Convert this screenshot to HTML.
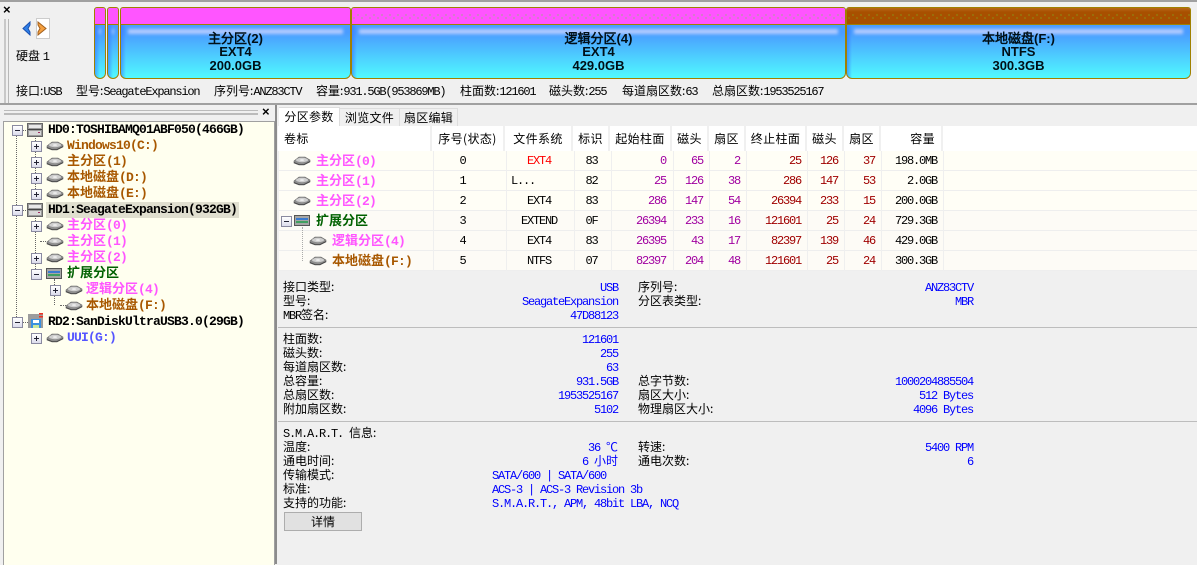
<!DOCTYPE html>
<html><head><meta charset="utf-8"><style>
html,body{margin:0;padding:0}
body{position:relative;width:1197px;height:564px;overflow:hidden;background:#f0f0f0;font-family:"WenQuanYi Zen Hei","Noto Sans CJK SC",sans-serif;font-size:12px;color:#000}
div,svg{position:absolute}
.t{white-space:nowrap;line-height:14px;height:14px}
.t i,i{font:normal 12px/14px "Liberation Mono",monospace;letter-spacing:-1.2px}
.r{text-align:right}
.c{text-align:center}
.b{font-weight:bold}
.bl{color:#0000ff}
.bl i{color:#0000ff}
.bar{top:7px;height:70px;border:1px solid #a08000;border-radius:3px 3px 6px 6px;box-sizing:content-box;overflow:hidden;background:linear-gradient(90deg,rgba(50,110,255,.55),rgba(50,110,255,0) 5px),linear-gradient(#4a9cff 35%,#50faff 100%)}
.bar .top{position:absolute;left:0;right:0;top:0;height:16px;background:#ff55ff;border-bottom:1px solid #a08000}
.bar .top.dot{background:radial-gradient(circle,#66dd44 .6px,transparent .8px) 2px 3px/8px 8px repeat-x,radial-gradient(circle,#66dd44 .6px,transparent .8px) 6px 6px/8px 8px repeat-x,#ff55ff}
.bar .top.br{background:radial-gradient(circle,#77bb22 .6px,transparent .8px) 2px 3px/8px 8px repeat-x,radial-gradient(circle,#77bb22 .6px,transparent .8px) 6px 6px/8px 8px repeat-x,linear-gradient(#b86818 0,#a85000 4px)}
.bar .hl{position:absolute;left:7px;right:7px;top:21px;height:5px;background:#b4ccff;filter:blur(1.5px)}
.bar .lb{position:absolute;left:0;right:0;text-align:center;font-weight:bold;font-size:13px;line-height:14px;color:#001018;font-family:"Liberation Sans","WenQuanYi Zen Hei",sans-serif}
.tr{left:4px;white-space:nowrap;font-weight:bold;font-size:13px;line-height:16px;height:16px;margin-top:-1px}
.tr i{font:bold 13px/16px "Liberation Mono",monospace;letter-spacing:-.8px}
.m{color:#ff55ff}.o{color:#a85800}.g{color:#006000}.u{color:#5555ff}
.hd{top:126px;height:25px;line-height:25px;text-align:center;background:#fff;border-right:2px solid #f0f0f0;box-sizing:border-box;font-size:12px;letter-spacing:.4px}
.row{left:279px;width:918px;height:19px;border-bottom:1px solid #eeeeee}
.vl{top:151px;width:1px;height:120px;background:#efefef}
.cell{white-space:nowrap;height:20px;line-height:20px;margin-top:-1px}
.cell i{font:normal 12px/20px "Liberation Mono",monospace;letter-spacing:-1.2px}
.cell.tr i{font:bold 13px/20px "Liberation Mono",monospace;letter-spacing:-.8px}
.pu{color:#a000a0}.pu i{color:#a000a0}.rd{color:#a00000}.rd i{color:#a00000}
.pb{width:9px;height:9px;border:1px solid #8a8aa0;background:linear-gradient(#fff,#dcdcec)}
.pb:before{content:"";position:absolute;left:2px;right:2px;top:4px;height:1px;background:#223}
.pb.p:after{content:"";position:absolute;top:2px;bottom:2px;left:4px;width:1px;background:#223}
.dv{width:1px;border-left:1px dotted #666}
.dh{height:1px;border-top:1px dotted #666}
</style></head><body>
<svg width="0" height="0" style="position:absolute"><defs>
<symbol id="d" viewBox="0 0 18 10"><path d="M1 5 L6 1 H12 L17 4 V6 L11 9 H6 L1 7Z" fill="#8e8e8e" stroke="#666" stroke-width=".6"/><ellipse cx="9" cy="4" rx="6" ry="2.2" fill="#cfcfcf"/><ellipse cx="9" cy="4" rx="2" ry=".8" fill="#f4f4f4"/><path d="M1 6.5 L6 8.5 H11 L17 5.5" stroke="#444" stroke-width=".8" fill="none"/></symbol>
<symbol id="h" viewBox="0 0 16 14"><rect x=".5" y=".5" width="15" height="13" fill="#9c9c9c" stroke="#666"/><rect x="2" y="2" width="12" height="3" fill="#e8e8e8"/><rect x="1" y="6" width="14" height="1" fill="#444"/><rect x="2" y="8" width="12" height="4" fill="#d8d8d8"/><rect x="11" y="9" width="2" height="1" fill="#a03060"/></symbol>
<symbol id="x" viewBox="0 0 16 11"><rect x=".5" y=".5" width="15" height="10" fill="#a6a6a6" stroke="#555"/><rect x="2" y="3" width="12" height="2" fill="#3a7ad0"/><rect x="2" y="6" width="12" height="2" fill="#40a060"/></symbol>
</defs></svg>

<div style="left:0;top:0;width:1197px;height:2px;background:#a0a0a0"></div>
<div class="t b" style="left:3px;top:3px;font-family:'Liberation Sans';font-size:13px">×</div>
<div style="left:4px;top:19px;width:2px;height:84px;background:#c8c8c8"></div>
<div style="left:8px;top:19px;width:1px;height:84px;background:#b8b8b8"></div>
<div style="left:36px;top:18px;width:12px;height:19px;background:#fff;border:1px solid #ccc"></div>
<svg style="left:21px;top:21px" width="11" height="15"><path d="M9 1 L2 7.5 L9 14 L9 11 L7 7.5 L9 4Z" fill="#2f80e8" stroke="#1a50b0" stroke-width="1"/></svg>
<svg style="left:37px;top:21px" width="10" height="15"><path d="M1 1 L9 7.5 L1 14 L1 11 L3 7.5 L1 4Z" fill="#f5a040" stroke="#a06020" stroke-width="1"/></svg>
<div class="t" style="left:16px;top:49px">硬盘 <i>1</i></div>

<div class="bar" style="left:94px;width:10px"><div class="top"></div><div class="hl" style="left:4px;right:4px"></div></div>
<div class="bar" style="left:107px;width:10px"><div class="top"></div><div class="hl" style="left:4px;right:4px"></div></div>
<div class="bar" style="left:120px;width:229px"><div class="top"></div><div class="hl"></div><div class="lb" style="top:24px">主分区(2)</div><div class="lb" style="top:37px">EXT4</div><div class="lb" style="top:51px">200.0GB</div></div>
<div class="bar" style="left:351px;width:493px"><div class="top dot"></div><div class="hl"></div><div class="lb" style="top:24px">逻辑分区(4)</div><div class="lb" style="top:37px">EXT4</div><div class="lb" style="top:51px">429.0GB</div></div>
<div class="bar" style="left:846px;width:343px"><div class="top br"></div><div class="hl"></div><div class="lb" style="top:24px">本地磁盘(F:)</div><div class="lb" style="top:37px">NTFS</div><div class="lb" style="top:51px">300.3GB</div></div>

<div class="t" style="left:16px;top:84px">接口:<i>USB</i></div>
<div class="t" style="left:76px;top:84px">型号:<i>SeagateExpansion</i></div>
<div class="t" style="left:214px;top:84px">序列号:<i>ANZ83CTV</i></div>
<div class="t" style="left:316px;top:84px">容量:<i>931.5GB(953869MB)</i></div>
<div class="t" style="left:460px;top:84px">柱面数:<i>121601</i></div>
<div class="t" style="left:549px;top:84px">磁头数:<i>255</i></div>
<div class="t" style="left:622px;top:84px">每道扇区数:<i>63</i></div>
<div class="t" style="left:712px;top:84px">总扇区数:<i>1953525167</i></div>

<div style="left:0;top:103px;width:1197px;height:2px;background:#a0a0a0"></div>

<!-- left pane -->
<div style="left:4px;top:110px;width:254px;height:2px;border-top:1px solid #bbb;border-bottom:1px solid #bbb"></div>
<div style="left:4px;top:114px;width:254px;height:1px;background:#bbb"></div>
<div class="t b" style="left:262px;top:105px;font-family:'Liberation Sans';font-size:13px">×</div>
<div style="left:3px;top:121px;width:270px;height:443px;background:#ffffef;border-left:1px solid #a0a0a0;border-top:1px solid #a0a0a0;border-right:1px solid #a0a0a0"></div>
<div style="left:275px;top:105px;width:2px;height:459px;background:#8c8c8c"></div>

<div class="dv" style="left:16px;top:135px;height:70px"></div>
<div class="dv" style="left:16px;top:215px;height:102px"></div>
<div class="dv" style="left:35px;top:135px;height:60px"></div>
<div class="dv" style="left:35px;top:215px;height:60px"></div>
<div class="dv" style="left:54px;top:279px;height:26px"></div>
<div class="dh" style="left:60px;top:305px;width:6px"></div>
<div class="dh" style="left:40px;top:241px;width:6px"></div>
<div class="dh" style="left:21px;top:130px;width:7px"></div>
<div class="dh" style="left:21px;top:210px;width:7px"></div>
<div class="dh" style="left:21px;top:322px;width:7px"></div>

<div class="pb" style="left:12px;top:125px"></div>
<svg style="left:27px;top:123px" width="16" height="14"><use href="#h"/></svg>
<div class="tr" style="left:48px;top:121px"><i>HD0:TOSHIBAMQ01ABF050(466GB)</i></div>

<div class="pb p" style="left:31px;top:141px"></div><svg style="left:46px;top:141px" width="18" height="10"><use href="#d"/></svg>
<div class="tr o" style="left:67px;top:137px"><i>Windows10(C:)</i></div>
<div class="pb p" style="left:31px;top:157px"></div><svg style="left:46px;top:157px" width="18" height="10"><use href="#d"/></svg>
<div class="tr o" style="left:67px;top:153px">主分区<i>(1)</i></div>
<div class="pb p" style="left:31px;top:173px"></div><svg style="left:46px;top:173px" width="18" height="10"><use href="#d"/></svg>
<div class="tr o" style="left:67px;top:169px">本地磁盘<i>(D:)</i></div>
<div class="pb p" style="left:31px;top:189px"></div><svg style="left:46px;top:189px" width="18" height="10"><use href="#d"/></svg>
<div class="tr o" style="left:67px;top:185px">本地磁盘<i>(E:)</i></div>

<div style="left:46px;top:202px;width:193px;height:16px;background:#e0dfcf"></div>
<div class="pb" style="left:12px;top:205px"></div>
<svg style="left:27px;top:203px" width="16" height="14"><use href="#h"/></svg>
<div class="tr" style="left:48px;top:201px"><i>HD1:SeagateExpansion(932GB)</i></div>

<div class="pb p" style="left:31px;top:221px"></div><svg style="left:46px;top:221px" width="18" height="10"><use href="#d"/></svg>
<div class="tr m" style="left:67px;top:217px">主分区<i>(0)</i></div>
<svg style="left:46px;top:237px" width="18" height="10"><use href="#d"/></svg>
<div class="tr m" style="left:67px;top:233px">主分区<i>(1)</i></div>
<div class="pb p" style="left:31px;top:253px"></div><svg style="left:46px;top:253px" width="18" height="10"><use href="#d"/></svg>
<div class="tr m" style="left:67px;top:249px">主分区<i>(2)</i></div>
<div class="pb" style="left:31px;top:269px"></div><svg style="left:46px;top:268px" width="16" height="11"><use href="#x"/></svg>
<div class="tr g" style="left:67px;top:265px">扩展分区</div>
<div class="pb p" style="left:50px;top:285px"></div><svg style="left:65px;top:285px" width="18" height="10"><use href="#d"/></svg>
<div class="tr m" style="left:86px;top:281px">逻辑分区<i>(4)</i></div>
<svg style="left:65px;top:301px" width="18" height="10"><use href="#d"/></svg>
<div class="tr o" style="left:86px;top:297px">本地磁盘<i>(F:)</i></div>

<div class="pb" style="left:12px;top:317px"></div>
<svg style="left:27px;top:313px" width="17" height="16"><rect x="1" y="1" width="15" height="14" fill="#9c9c9c"/><rect x="4" y="6" width="10" height="9" fill="#3a90e0"/><rect x="6" y="7" width="6" height="3" fill="#fff"/><rect x="6" y="12" width="6" height="3" fill="#c8e8a0"/><rect x="12" y="0" width="4" height="1.5" fill="#f03020"/><rect x="12" y="3" width="4" height="1.5" fill="#f03020"/></svg>
<div class="tr" style="left:48px;top:313px"><i>RD2:SanDiskUltraUSB3.0(29GB)</i></div>
<div class="pb p" style="left:31px;top:333px"></div><svg style="left:46px;top:333px" width="18" height="10"><use href="#d"/></svg>
<div class="tr u" style="left:67px;top:329px"><i>UUI(G:)</i></div>

<!-- tabs -->
<div style="left:278px;top:105px;width:919px;height:21px;background:#f0f0f0"></div>
<div class="t c" style="left:279px;top:107px;width:60px;height:19px;line-height:18px;background:#fff;border-top:1px solid #ddd;border-right:1px solid #ddd;letter-spacing:.3px">分区参数</div>
<div class="t c" style="left:340px;top:108px;width:59px;height:17px;line-height:17px;border:1px solid #ddd;border-left:0;letter-spacing:.3px">浏览文件</div>
<div class="t c" style="left:400px;top:108px;width:57px;height:17px;line-height:17px;border:1px solid #ddd;border-left:0;letter-spacing:.3px">扇区编辑</div>

<!-- table -->
<div style="left:278px;top:126px;width:919px;height:25px;background:#fff"></div>
<div class="hd" style="left:278px;width:154px;text-align:left;padding-left:6px">卷标</div>
<div class="hd" style="left:432px;width:73px">序号(状态)</div>
<div class="hd" style="left:505px;width:68px">文件系统</div>
<div class="hd" style="left:573px;width:37px">标识</div>
<div class="hd" style="left:610px;width:62px">起始柱面</div>
<div class="hd" style="left:672px;width:37px">磁头</div>
<div class="hd" style="left:709px;width:37px">扇区</div>
<div class="hd" style="left:746px;width:61px">终止柱面</div>
<div class="hd" style="left:807px;width:37px">磁头</div>
<div class="hd" style="left:844px;width:37px">扇区</div>
<div class="hd" style="left:881px;width:62px;text-align:right;padding-right:6px">容量</div>

<div class="row" style="top:151px;background:#fffef6"></div>
<div class="row" style="top:171px;background:#fffef6"></div>
<div class="row" style="top:191px;background:#fffef6"></div>
<div class="row" style="top:211px;background:#fdfbf6"></div>
<div class="row" style="top:231px;background:#fdfbf6"></div>
<div class="row" style="top:251px;background:#fdfbf6"></div>
<div class="vl" style="left:433px"></div><div class="vl" style="left:506px"></div><div class="vl" style="left:574px"></div><div class="vl" style="left:611px"></div><div class="vl" style="left:673px"></div><div class="vl" style="left:709px"></div><div class="vl" style="left:746px"></div><div class="vl" style="left:807px"></div><div class="vl" style="left:844px"></div><div class="vl" style="left:881px"></div><div class="vl" style="left:943px"></div>

<svg style="left:293px;top:156px" width="18" height="10"><use href="#d"/></svg><div class="cell tr m" style="left:316px;top:151px;line-height:20px;height:20px">主分区<i>(0)</i></div>
<svg style="left:293px;top:176px" width="18" height="10"><use href="#d"/></svg><div class="cell tr m" style="left:316px;top:171px;line-height:20px;height:20px">主分区<i>(1)</i></div>
<svg style="left:293px;top:196px" width="18" height="10"><use href="#d"/></svg><div class="cell tr m" style="left:316px;top:191px;line-height:20px;height:20px">主分区<i>(2)</i></div>
<div class="pb" style="left:281px;top:216px"></div><svg style="left:294px;top:215px" width="16" height="11"><use href="#x"/></svg><div class="cell tr g" style="left:316px;top:211px;line-height:20px;height:20px">扩展分区</div>
<div class="dv" style="left:302px;top:227px;height:34px;border-color:#aaa"></div>
<svg style="left:309px;top:236px" width="18" height="10"><use href="#d"/></svg><div class="cell tr m" style="left:332px;top:231px;line-height:20px;height:20px">逻辑分区<i>(4)</i></div>
<svg style="left:309px;top:256px" width="18" height="10"><use href="#d"/></svg><div class="cell tr o" style="left:332px;top:251px;line-height:20px;height:20px">本地磁盘<i>(F:)</i></div>

<!-- cells: idx, fs, id -->
<div class="cell c" style="left:432px;top:151px;width:61px"><i>0</i></div>
<div class="cell c" style="left:432px;top:171px;width:61px"><i>1</i></div>
<div class="cell c" style="left:432px;top:191px;width:61px"><i>2</i></div>
<div class="cell c" style="left:432px;top:211px;width:61px"><i>3</i></div>
<div class="cell c" style="left:432px;top:231px;width:61px"><i>4</i></div>
<div class="cell c" style="left:432px;top:251px;width:61px"><i>5</i></div>
<div class="cell c" style="left:505px;top:151px;width:68px"><i style="color:#f00">EXT4</i></div>
<div class="cell" style="left:511px;top:171px"><i>L...</i></div>
<div class="cell c" style="left:505px;top:191px;width:68px"><i>EXT4</i></div>
<div class="cell c" style="left:505px;top:211px;width:68px"><i>EXTEND</i></div>
<div class="cell c" style="left:505px;top:231px;width:68px"><i>EXT4</i></div>
<div class="cell c" style="left:505px;top:251px;width:68px"><i>NTFS</i></div>
<div class="cell c" style="left:573px;top:151px;width:37px"><i>83</i></div>
<div class="cell c" style="left:573px;top:171px;width:37px"><i>82</i></div>
<div class="cell c" style="left:573px;top:191px;width:37px"><i>83</i></div>
<div class="cell c" style="left:573px;top:211px;width:37px"><i>0F</i></div>
<div class="cell c" style="left:573px;top:231px;width:37px"><i>83</i></div>
<div class="cell c" style="left:573px;top:251px;width:37px"><i>07</i></div>
<!-- start -->
<div class="cell r pu" style="left:610px;top:151px;width:56px"><i>0</i></div>
<div class="cell r pu" style="left:610px;top:171px;width:56px"><i>25</i></div>
<div class="cell r pu" style="left:610px;top:191px;width:56px"><i>286</i></div>
<div class="cell r pu" style="left:610px;top:211px;width:56px"><i>26394</i></div>
<div class="cell r pu" style="left:610px;top:231px;width:56px"><i>26395</i></div>
<div class="cell r pu" style="left:610px;top:251px;width:56px"><i>82397</i></div>
<div class="cell r pu" style="left:672px;top:151px;width:31px"><i>65</i></div>
<div class="cell r pu" style="left:672px;top:171px;width:31px"><i>126</i></div>
<div class="cell r pu" style="left:672px;top:191px;width:31px"><i>147</i></div>
<div class="cell r pu" style="left:672px;top:211px;width:31px"><i>233</i></div>
<div class="cell r pu" style="left:672px;top:231px;width:31px"><i>43</i></div>
<div class="cell r pu" style="left:672px;top:251px;width:31px"><i>204</i></div>
<div class="cell r pu" style="left:709px;top:151px;width:31px"><i>2</i></div>
<div class="cell r pu" style="left:709px;top:171px;width:31px"><i>38</i></div>
<div class="cell r pu" style="left:709px;top:191px;width:31px"><i>54</i></div>
<div class="cell r pu" style="left:709px;top:211px;width:31px"><i>16</i></div>
<div class="cell r pu" style="left:709px;top:231px;width:31px"><i>17</i></div>
<div class="cell r pu" style="left:709px;top:251px;width:31px"><i>48</i></div>
<!-- end -->
<div class="cell r rd" style="left:746px;top:151px;width:55px"><i>25</i></div>
<div class="cell r rd" style="left:746px;top:171px;width:55px"><i>286</i></div>
<div class="cell r rd" style="left:746px;top:191px;width:55px"><i>26394</i></div>
<div class="cell r rd" style="left:746px;top:211px;width:55px"><i>121601</i></div>
<div class="cell r rd" style="left:746px;top:231px;width:55px"><i>82397</i></div>
<div class="cell r rd" style="left:746px;top:251px;width:55px"><i>121601</i></div>
<div class="cell r rd" style="left:807px;top:151px;width:31px"><i>126</i></div>
<div class="cell r rd" style="left:807px;top:171px;width:31px"><i>147</i></div>
<div class="cell r rd" style="left:807px;top:191px;width:31px"><i>233</i></div>
<div class="cell r rd" style="left:807px;top:211px;width:31px"><i>25</i></div>
<div class="cell r rd" style="left:807px;top:231px;width:31px"><i>139</i></div>
<div class="cell r rd" style="left:807px;top:251px;width:31px"><i>25</i></div>
<div class="cell r rd" style="left:844px;top:151px;width:31px"><i>37</i></div>
<div class="cell r rd" style="left:844px;top:171px;width:31px"><i>53</i></div>
<div class="cell r rd" style="left:844px;top:191px;width:31px"><i>15</i></div>
<div class="cell r rd" style="left:844px;top:211px;width:31px"><i>24</i></div>
<div class="cell r rd" style="left:844px;top:231px;width:31px"><i>46</i></div>
<div class="cell r rd" style="left:844px;top:251px;width:31px"><i>24</i></div>
<div class="cell r" style="left:881px;top:151px;width:56px"><i>198.0MB</i></div>
<div class="cell r" style="left:881px;top:171px;width:56px"><i>2.0GB</i></div>
<div class="cell r" style="left:881px;top:191px;width:56px"><i>200.0GB</i></div>
<div class="cell r" style="left:881px;top:211px;width:56px"><i>729.3GB</i></div>
<div class="cell r" style="left:881px;top:231px;width:56px"><i>429.0GB</i></div>
<div class="cell r" style="left:881px;top:251px;width:56px"><i>300.3GB</i></div>

<!-- info -->
<div style="left:278px;top:272px;width:919px;height:292px;background:#f0f0f0"></div>
<div style="left:278px;top:327px;width:919px;height:1px;background:#bdbdbd"></div>
<div style="left:278px;top:421px;width:919px;height:1px;background:#bdbdbd"></div>

<div class="t" style="left:283px;top:280px">接口类型:</div><div class="t r bl" style="left:420px;top:280px;width:198px"><i>USB</i></div>
<div class="t" style="left:283px;top:294px">型号:</div><div class="t r bl" style="left:420px;top:294px;width:198px"><i>SeagateExpansion</i></div>
<div class="t" style="left:283px;top:308px"><i>MBR</i>签名:</div><div class="t r bl" style="left:420px;top:308px;width:198px"><i>47D88123</i></div>
<div class="t" style="left:638px;top:280px">序列号:</div><div class="t r bl" style="left:775px;top:280px;width:198px"><i>ANZ83CTV</i></div>
<div class="t" style="left:638px;top:294px">分区表类型:</div><div class="t r bl" style="left:775px;top:294px;width:198px"><i>MBR</i></div>

<div class="t" style="left:283px;top:332px">柱面数:</div><div class="t r bl" style="left:420px;top:332px;width:198px"><i>121601</i></div>
<div class="t" style="left:283px;top:346px">磁头数:</div><div class="t r bl" style="left:420px;top:346px;width:198px"><i>255</i></div>
<div class="t" style="left:283px;top:360px">每道扇区数:</div><div class="t r bl" style="left:420px;top:360px;width:198px"><i>63</i></div>
<div class="t" style="left:283px;top:374px">总容量:</div><div class="t r bl" style="left:420px;top:374px;width:198px"><i>931.5GB</i></div>
<div class="t" style="left:283px;top:388px">总扇区数:</div><div class="t r bl" style="left:420px;top:388px;width:198px"><i>1953525167</i></div>
<div class="t" style="left:283px;top:402px">附加扇区数:</div><div class="t r bl" style="left:420px;top:402px;width:198px"><i>5102</i></div>
<div class="t" style="left:638px;top:374px">总字节数:</div><div class="t r bl" style="left:775px;top:374px;width:198px"><i>1000204885504</i></div>
<div class="t" style="left:638px;top:388px">扇区大小:</div><div class="t r bl" style="left:775px;top:388px;width:198px"><i>512 Bytes</i></div>
<div class="t" style="left:638px;top:402px">物理扇区大小:</div><div class="t r bl" style="left:775px;top:402px;width:198px"><i>4096 Bytes</i></div>

<div class="t" style="left:283px;top:426px"><i>S.M.A.R.T. </i>信息:</div>
<div class="t" style="left:283px;top:440px">温度:</div><div class="t r bl" style="left:420px;top:440px;width:198px"><i>36 </i>℃</div>
<div class="t" style="left:283px;top:454px">通电时间:</div><div class="t r bl" style="left:420px;top:454px;width:198px"><i>6 </i>小时</div>
<div class="t" style="left:283px;top:468px">传输模式:</div><div class="t bl" style="left:492px;top:468px"><i>SATA/600 | SATA/600</i></div>
<div class="t" style="left:283px;top:482px">标准:</div><div class="t bl" style="left:492px;top:482px"><i>ACS-3 | ACS-3 Revision 3b</i></div>
<div class="t" style="left:283px;top:496px">支持的功能:</div><div class="t bl" style="left:492px;top:496px"><i>S.M.A.R.T., APM, 48bit LBA, NCQ</i></div>
<div class="t" style="left:638px;top:440px">转速:</div><div class="t r bl" style="left:775px;top:440px;width:198px"><i>5400 RPM</i></div>
<div class="t" style="left:638px;top:454px">通电次数:</div><div class="t r bl" style="left:775px;top:454px;width:198px"><i>6</i></div>
<div class="t c" style="left:284px;top:512px;width:76px;height:17px;line-height:17px;background:#e1e1e1;border:1px solid #adadad">详情</div>
</body></html>
